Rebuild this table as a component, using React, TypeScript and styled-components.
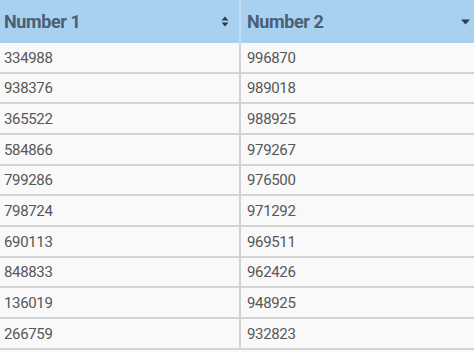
import React from "react";
import styled, { createGlobalStyle } from "styled-components";

const GlobalStyle = createGlobalStyle`
  html, body { margin: 0; padding: 0; background: #f9f9f9; }
  body { font-family: Roboto, "Liberation Sans", sans-serif; }
`;

const Table = styled.div`
  width: 474px;
  display: flex;
  flex-direction: column;
  background: #f9f9f9;
`;

const HeaderRow = styled.div`
  display: flex;
  height: 43px;
  background: #a7d0f1;
`;

const HeaderCell = styled.div<{ $first?: boolean }>`
  box-sizing: border-box;
  display: flex;
  align-items: center;
  justify-content: space-between;
  width: ${(p) => (p.$first ? "241px" : "233px")};
  padding: 0 ${(p) => (p.$first ? "10px" : "4px")} 0 ${(p) => (p.$first ? "4px" : "6px")};
  border-right: ${(p) => (p.$first ? "2px solid #c3def4" : "none")};
  font-size: 18px;
  font-weight: 700;
  letter-spacing: -0.4px;
  color: #4b6074;
`;

const Row = styled.div`
  box-sizing: border-box;
  display: flex;
  height: 30.67px;
  border-bottom: 2px solid #d3d3d3;
`;

const Cell = styled.div<{ $first?: boolean }>`
  box-sizing: border-box;
  display: flex;
  align-items: center;
  width: ${(p) => (p.$first ? "241px" : "233px")};
  padding: 1px 0 0 ${(p) => (p.$first ? "4px" : "6px")};
  border-right: ${(p) => (p.$first ? "2px solid #d3d3d3" : "none")};
  font-size: 15px;
  letter-spacing: -0.35px;
  color: #575757;
`;

const SortBoth = () => (
  <svg width="8" height="11" viewBox="0 0 8 11">
    <path d="M4 0.5 L7.5 4.5 L0.5 4.5 Z" fill="#2f3b46" />
    <path d="M4 10.5 L7.5 6.5 L0.5 6.5 Z" fill="#2f3b46" />
  </svg>
);

const SortDown = () => (
  <svg width="9" height="6" viewBox="0 0 9 6">
    <path d="M0 0.5 L9 0.5 L4.5 5.5 Z" fill="#2f3b46" />
  </svg>
);

const rows: [string, string][] = [
  ["334988", "996870"],
  ["938376", "989018"],
  ["365522", "988925"],
  ["584866", "979267"],
  ["799286", "976500"],
  ["798724", "971292"],
  ["690113", "969511"],
  ["848833", "962426"],
  ["136019", "948925"],
  ["266759", "932823"],
];

export default function App() {
  return (
    <>
      <GlobalStyle />
      <Table>
        <HeaderRow>
          <HeaderCell $first>
            <span>Number 1</span>
            <SortBoth />
          </HeaderCell>
          <HeaderCell>
            <span>Number 2</span>
            <SortDown />
          </HeaderCell>
        </HeaderRow>
        {rows.map(([a, b]) => (
          <Row key={a}>
            <Cell $first>{a}</Cell>
            <Cell>{b}</Cell>
          </Row>
        ))}
      </Table>
    </>
  );
}
